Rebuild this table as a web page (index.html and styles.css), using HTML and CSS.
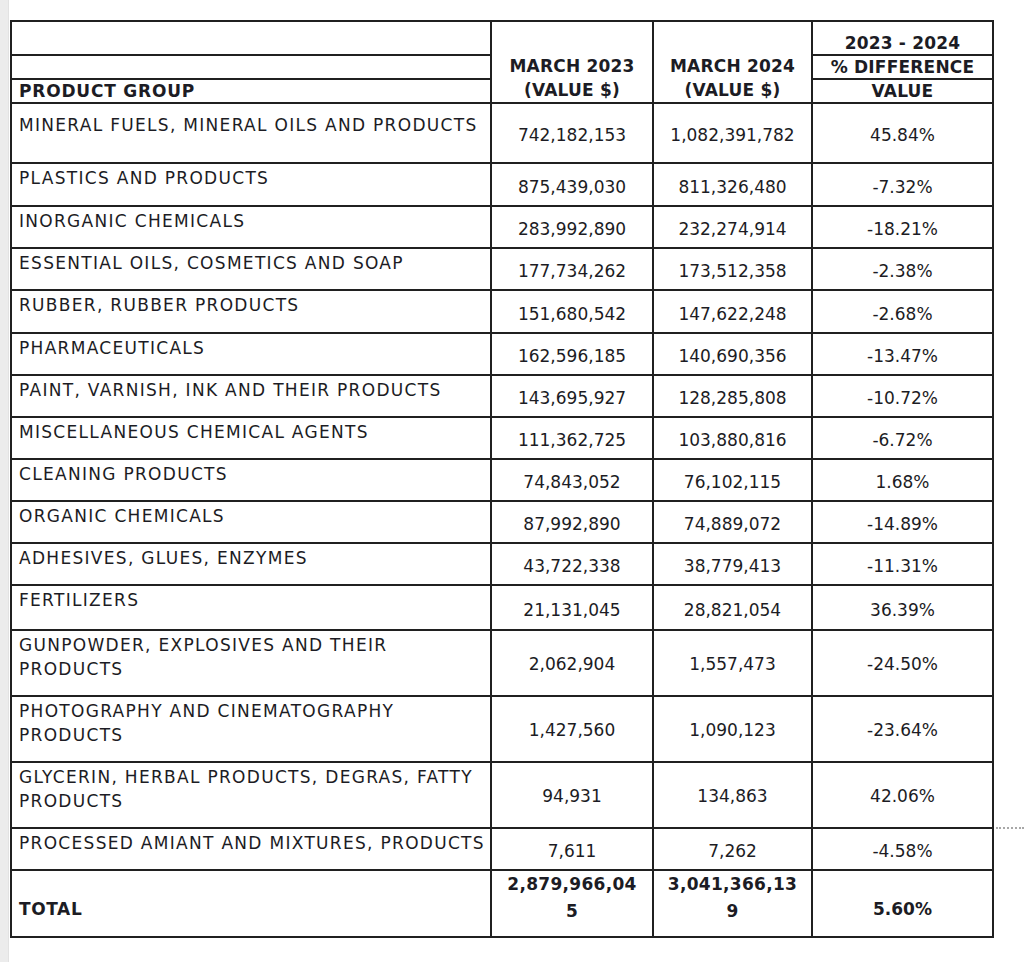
FILE: index.html
```html
<!DOCTYPE html>
<html lang="en">
<head>
<meta charset="utf-8">
<title>Product group values March 2023 vs March 2024</title>
<link rel="stylesheet" href="styles.css">
</head>
<body>
<div class="page">
  <div class="gutter"></div>
  <main class="sheet">
    <table class="data">
      <colgroup>
        <col class="c-label">
        <col class="c-v1">
        <col class="c-v2">
        <col class="c-pct">
      </colgroup>
      <thead>
        <tr class="h1">
          <th class="lbl"></th>
          <th class="hv" rowspan="3">MARCH 2023<br>(VALUE $)</th>
          <th class="hv" rowspan="3">MARCH 2024<br>(VALUE $)</th>
          <th class="hp">2023 - 2024</th>
        </tr>
        <tr class="h2">
          <th class="lbl"></th>
          <th class="hp">% DIFFERENCE</th>
        </tr>
        <tr class="h3">
          <th class="lbl">PRODUCT GROUP</th>
          <th class="hp">VALUE</th>
        </tr>
      </thead>
      <tbody>
        <tr class="r first"><td class="lbl">MINERAL FUELS, MINERAL OILS AND PRODUCTS</td><td class="num">742,182,153</td><td class="num">1,082,391,782</td><td class="num">45.84%</td></tr>
        <tr class="r r43"><td class="lbl">PLASTICS AND PRODUCTS</td><td class="num">875,439,030</td><td class="num">811,326,480</td><td class="num">-7.32%</td></tr>
        <tr class="r"><td class="lbl">INORGANIC CHEMICALS</td><td class="num">283,992,890</td><td class="num">232,274,914</td><td class="num">-18.21%</td></tr>
        <tr class="r"><td class="lbl">ESSENTIAL OILS, COSMETICS AND SOAP</td><td class="num">177,734,262</td><td class="num">173,512,358</td><td class="num">-2.38%</td></tr>
        <tr class="r r43"><td class="lbl">RUBBER, RUBBER PRODUCTS</td><td class="num">151,680,542</td><td class="num">147,622,248</td><td class="num">-2.68%</td></tr>
        <tr class="r"><td class="lbl">PHARMACEUTICALS</td><td class="num">162,596,185</td><td class="num">140,690,356</td><td class="num">-13.47%</td></tr>
        <tr class="r"><td class="lbl">PAINT, VARNISH, INK AND THEIR PRODUCTS</td><td class="num">143,695,927</td><td class="num">128,285,808</td><td class="num">-10.72%</td></tr>
        <tr class="r"><td class="lbl">MISCELLANEOUS CHEMICAL AGENTS</td><td class="num">111,362,725</td><td class="num">103,880,816</td><td class="num">-6.72%</td></tr>
        <tr class="r"><td class="lbl">CLEANING PRODUCTS</td><td class="num">74,843,052</td><td class="num">76,102,115</td><td class="num">1.68%</td></tr>
        <tr class="r"><td class="lbl">ORGANIC CHEMICALS</td><td class="num">87,992,890</td><td class="num">74,889,072</td><td class="num">-14.89%</td></tr>
        <tr class="r"><td class="lbl">ADHESIVES, GLUES, ENZYMES</td><td class="num">43,722,338</td><td class="num">38,779,413</td><td class="num">-11.31%</td></tr>
        <tr class="r r45"><td class="lbl">FERTILIZERS</td><td class="num">21,131,045</td><td class="num">28,821,054</td><td class="num">36.39%</td></tr>
        <tr class="r2"><td class="lbl">GUNPOWDER, EXPLOSIVES AND THEIR PRODUCTS</td><td class="num">2,062,904</td><td class="num">1,557,473</td><td class="num">-24.50%</td></tr>
        <tr class="r2"><td class="lbl">PHOTOGRAPHY AND CINEMATOGRAPHY PRODUCTS</td><td class="num">1,427,560</td><td class="num">1,090,123</td><td class="num">-23.64%</td></tr>
        <tr class="r2"><td class="lbl">GLYCERIN, HERBAL PRODUCTS, DEGRAS, FATTY PRODUCTS</td><td class="num">94,931</td><td class="num">134,863</td><td class="num">42.06%</td></tr>
        <tr class="r"><td class="lbl">PROCESSED AMIANT AND MIXTURES, PRODUCTS</td><td class="num">7,611</td><td class="num">7,262</td><td class="num">-4.58%</td></tr>
        <tr class="tot"><td class="lbl">TOTAL</td><td class="tnum">2,879,966,04<br>5</td><td class="tnum">3,041,366,13<br>9</td><td class="tpct">5.60%</td></tr>
      </tbody>
    </table>
    <div class="break-mark"></div>
  </main>
</div>
</body>
</html>
```

FILE: styles.css
```css
html, body {
  margin: 0;
  padding: 0;
  background: #ffffff;
}

body {
  font-family: "DejaVu Sans", Verdana, sans-serif;
  color: #1c1c24;
}

.page {
  display: flex;
  min-height: 962px;
}

.gutter {
  width: 8px;
  flex: none;
  background: #ececec;
  border-right: 1px solid #e2e2e2;
}

.sheet {
  position: relative;
  flex: 1;
  padding: 20px 0 0 1px;
}

.data {
  border-collapse: collapse;
  table-layout: fixed;
  width: 982px;
  font-size: 17px;
}

.c-label { width: 480px; }
.c-v1 { width: 162px; }
.c-v2 { width: 159px; }
.c-pct { width: 181px; }

.data th,
.data td {
  border: 2px solid #202020;
  padding: 0;
}

.data th {
  font-weight: bold;
  line-height: 22px;
}

.data .lbl {
  text-align: left;
  padding-left: 7px;
  letter-spacing: 1.3px;
}

.data th.lbl {
  letter-spacing: 0.8px;
  vertical-align: bottom;
}

.h1 { height: 34px; }
.h2 { height: 24px; }
.h3 { height: 24px; }

.hv {
  text-align: center;
  vertical-align: bottom;
  letter-spacing: 0.2px;
}

.hv.hv { line-height: 24px; }

.hp {
  text-align: center;
  vertical-align: bottom;
  letter-spacing: 0.2px;
}

.r { height: 42px; }
.r43 { height: 43px; }
.r45 { height: 45px; }
.r2 { height: 66px; }
.first { height: 60px; }
.tot { height: 67px; }

.data td {
  line-height: 24px;
}

.data td.lbl {
  vertical-align: top;
  padding-top: 2px;
}

.first td.lbl {
  padding-top: 9px;
}

.data td.num {
  text-align: center;
  vertical-align: middle;
  padding-top: 4px;
}

.r2 td.num {
  padding-top: 1px;
}

.tot td {
  font-weight: bold;
}

.tot td.lbl {
  vertical-align: top;
  padding-top: 26px;
  letter-spacing: 0.6px;
}

.tot td.tnum {
  text-align: center;
  vertical-align: top;
  padding-top: 0;
  line-height: 27px;
  letter-spacing: 0.3px;
}

.tot td.tpct {
  text-align: center;
  vertical-align: top;
  padding-top: 26px;
}

.break-mark {
  position: absolute;
  left: 987px;
  top: 827px;
  width: 28px;
  border-top: 2px dotted #a8a8a8;
}
```
